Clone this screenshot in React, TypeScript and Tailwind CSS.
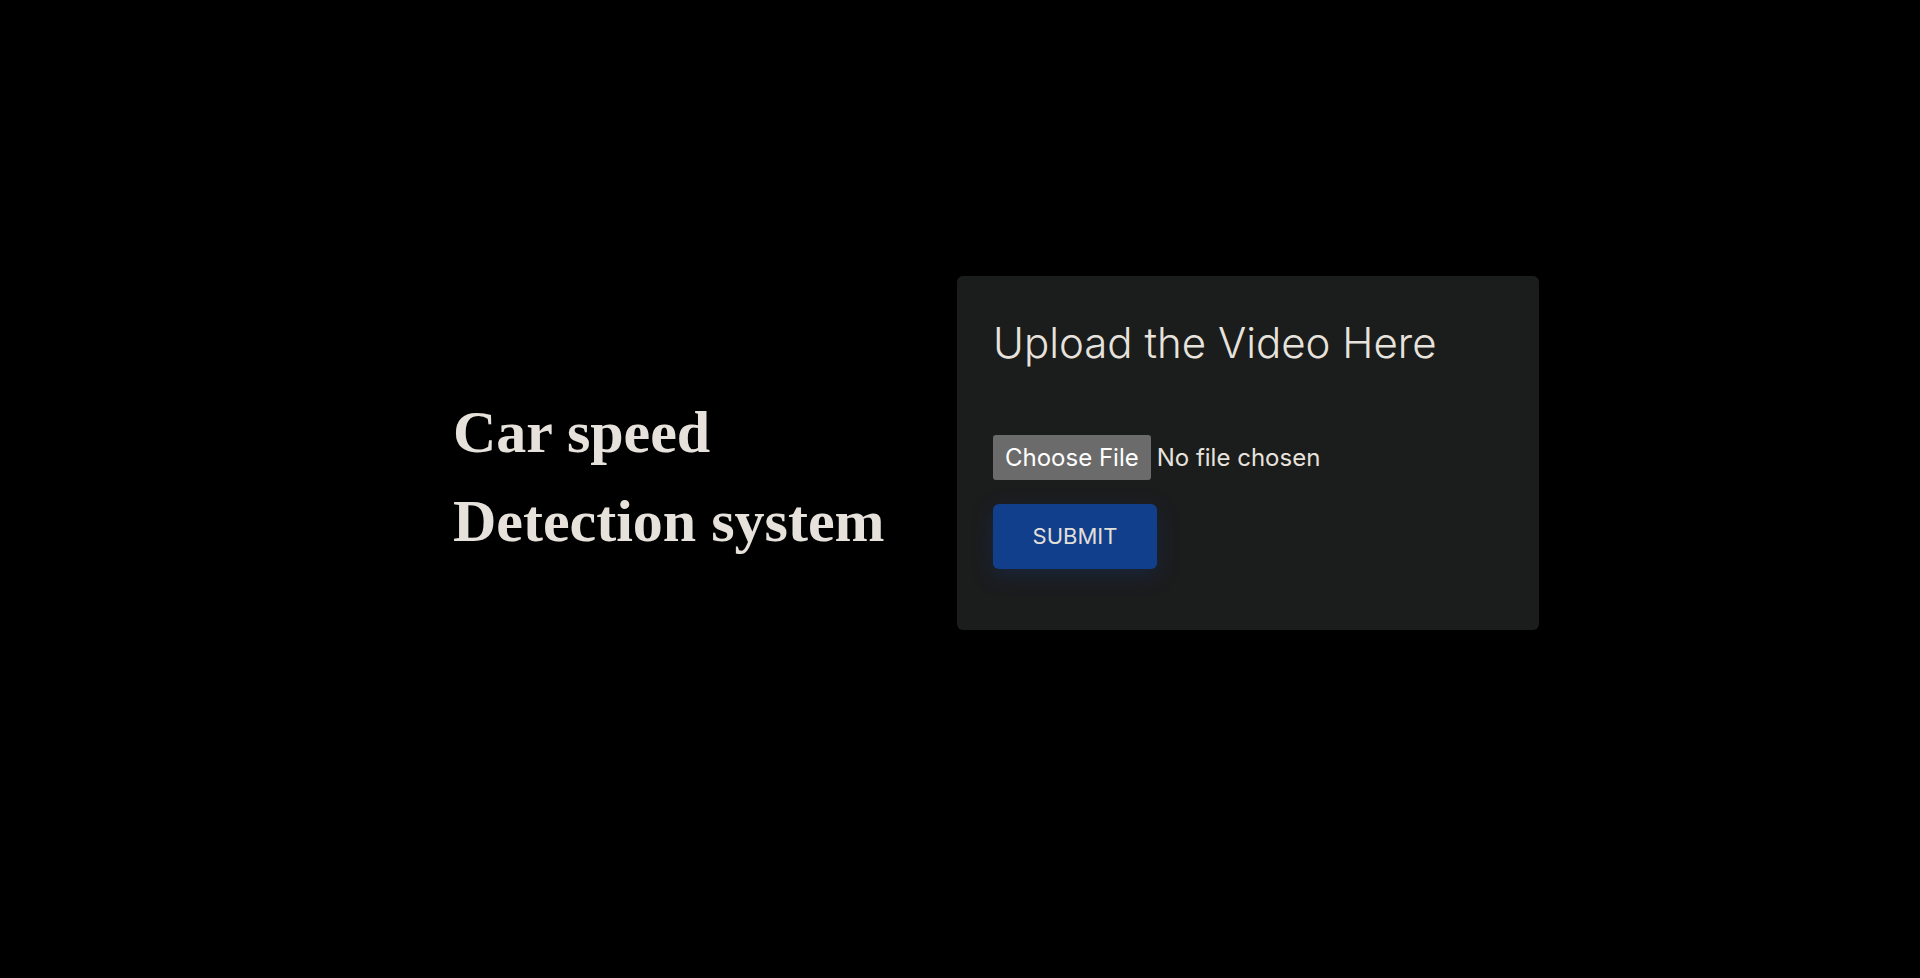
export default function App() {
  return (
    <main className="min-h-screen bg-black pl-[453px] pt-[276px]">
      <div className="flex items-start">
        <h1
          className="mt-[112px] w-[504px] text-[60px] font-bold leading-[89px] text-[#e6e2db]"
          style={{ fontFamily: '"Liberation Serif", "Times New Roman", serif' }}
        >
          <span className="block">Car speed</span>
          <span className="block">Detection system</span>
        </h1>

        <form
          className="w-[582px] rounded-md bg-[#1b1c1c] px-9 pb-[61px] pt-[43px]"
          style={{ fontFamily: 'Inter, "Noto Sans", sans-serif' }}
          onSubmit={(e) => e.preventDefault()}
        >
          <h2 className="text-[42px] font-light leading-[48px] text-[#e7e3dc]">Upload the Video Here</h2>

          <label className="mt-[68px] flex h-[45px] cursor-pointer items-center">
            <input type="file" accept="video/*" className="hidden" />
            <span className="flex h-full items-center rounded-[3px] bg-[#6b6b6b] px-3 text-[24px] text-white">
              Choose File
            </span>
            <span className="ml-[6px] text-[24px] text-[#e7e3dc]">No file chosen</span>
          </label>

          <button
            type="submit"
            className="mt-6 block h-[65px] w-[164px] rounded-md bg-[#123f8b] text-[22px] text-[#e2dfd9] shadow-[0_6px_22px_rgba(24,64,150,0.28)]"
          >
            SUBMIT
          </button>
        </form>
      </div>
    </main>
  )
}
